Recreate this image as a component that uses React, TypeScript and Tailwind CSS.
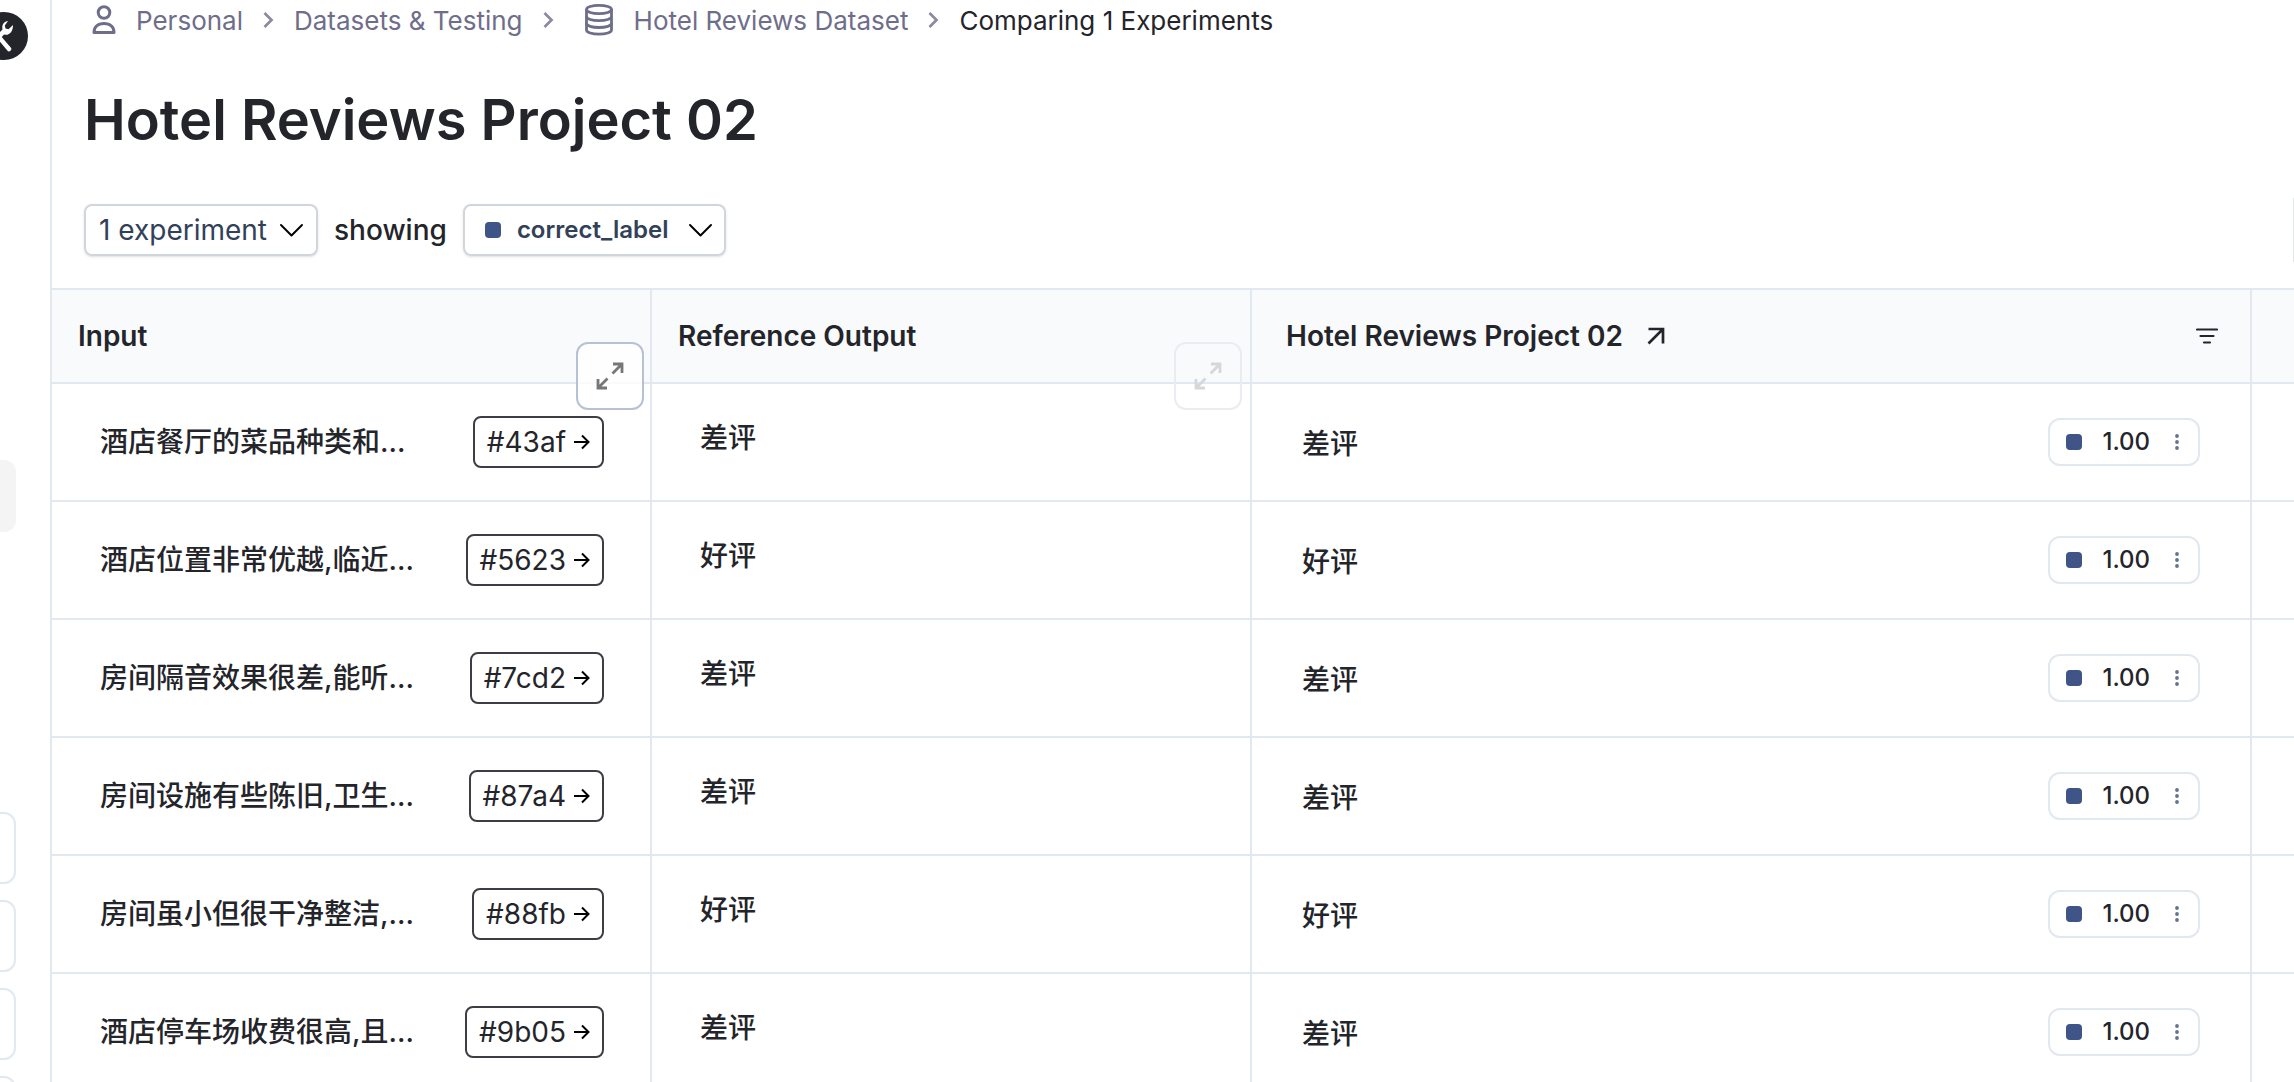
import { type ReactNode } from "react";
import { clsx } from "clsx";

interface IRow {
  input: string;
  id: string;
  reference: string;
  output: string;
  score: string;
}

const rows: IRow[] = [
  { input: "酒店餐厅的菜品种类和...", id: "#43af", reference: "差评", output: "差评", score: "1.00" },
  { input: "酒店位置非常优越,临近...", id: "#5623", reference: "好评", output: "好评", score: "1.00" },
  { input: "房间隔音效果很差,能听...", id: "#7cd2", reference: "差评", output: "差评", score: "1.00" },
  { input: "房间设施有些陈旧,卫生...", id: "#87a4", reference: "差评", output: "差评", score: "1.00" },
  { input: "房间虽小但很干净整洁,...", id: "#88fb", reference: "好评", output: "好评", score: "1.00" },
  { input: "酒店停车场收费很高,且...", id: "#9b05", reference: "差评", output: "差评", score: "1.00" },
];

const sidebarCards = [0, 1, 2, 3];

function PersonIcon() {
  return (
    <svg width="40" height="40" viewBox="0 0 40 40" fill="none" stroke="currentColor" strokeWidth="3" strokeLinejoin="round">
      <circle cx="20" cy="12.5" r="5.800" />
      <path d="M10 32.500c0-5.500 4-9 10-9s10 3.500 10 9z" />
    </svg>
  );
}

function DatabaseIcon() {
  return (
    <svg width="48" height="40" viewBox="0 0 48 40" fill="none" stroke="currentColor" strokeWidth="2.800">
      <ellipse cx="25" cy="9.500" rx="12.500" ry="4.200" />
      <path d="M12.500 9.500v20.500c0 2.400 5.600 4.200 12.500 4.200s12.500-1.800 12.500-4.200V9.500" />
      <path d="M12.500 16.500c0 2.400 5.600 4.200 12.500 4.200s12.500-1.800 12.500-4.200M12.500 23.300c0 2.400 5.600 4.200 12.500 4.200s12.500-1.800 12.500-4.200" />
    </svg>
  );
}

function Crumb({ children, icon }: { children: ReactNode; icon?: ReactNode }) {
  return (
    <li className="flex items-center gap-5">
      <a href="#" className="flex items-center gap-3">
        {icon}
        {children}
      </a>
      <svg width="11" height="18" viewBox="0 0 11 18" fill="none" stroke="currentColor" strokeWidth="2.700" opacity="0.800">
        <path d="M1.500 2l7 7-7 7" />
      </svg>
    </li>
  );
}

function ChevronDown() {
  return (
    <svg width="24" height="24" viewBox="0 0 24 24" fill="none" stroke="#000" strokeWidth="1.900" strokeLinecap="round" strokeLinejoin="round">
      <path d="M2 7l10.500 10.500L23 7" />
    </svg>
  );
}

function ExpandButton({ label, className }: { label: string; className: string }) {
  return (
    <button
      aria-label={label}
      className={clsx("absolute top-13 flex h-17 w-17 items-center justify-center rounded-xl border-2", className)}
    >
      <svg width="28" height="28" viewBox="0 0 28 28" fill="none" stroke="currentColor" strokeWidth="2.800">
        <path d="M16.500 11.500l9.500-9.500M17 2h9v9M11.500 16.500L2 26M2 17v9h9" />
      </svg>
    </button>
  );
}

function Sidebar() {
  return (
    <aside className="w-13 shrink-0 overflow-hidden border-r-2 border-slate-200">
      <div className="-ml-5 mt-3 h-12 w-12 rounded-full bg-[#24252b] text-white">
        <svg width="48" height="48" viewBox="0 0 48 48" fill="currentColor">
          <path d="M28 9c-4 .500-6.500 4-5.500 8.500L10 30l4 4 10-11.500c5 1.500 9-2.500 9-9.500l-4.500 4.200-3-.700-.700-3z" />
          <path d="M18 24l11 13" stroke="currentColor" strokeWidth="4.500" strokeLinecap="round" />
        </svg>
      </div>
      <div className="-ml-14 mt-100 h-18 w-18 rounded-xl bg-[#f4f4f4]" />
      <div className="-ml-13 mt-70 flex flex-col gap-4">
        {sidebarCards.map((item) => (
          <div key={item} className="h-18 w-17 rounded-xl border-2 border-slate-200" />
        ))}
      </div>
    </aside>
  );
}

export default function App() {
  return (
    <div className="flex h-screen overflow-hidden bg-white font-[Inter,'Noto_Sans_CJK_SC',sans-serif] text-[28px] text-[#24252b]">
      <Sidebar />
      <main className="min-w-0 flex-1">
        <header className="pl-8">
          <nav aria-label="Breadcrumb" className="text-[#6f6e8a]">
            <ol className="flex h-10 items-center gap-5 text-[26px]">
              <Crumb icon={<PersonIcon />}>Personal</Crumb>
              <Crumb>Datasets &amp; Testing</Crumb>
              <Crumb icon={<DatabaseIcon />}>Hotel Reviews Dataset</Crumb>
              <li className="text-[#24252b]">Comparing 1 Experiments</li>
            </ol>
          </nav>
          <h1 className="mt-11 text-[56px] leading-[72px] font-semibold">Hotel Reviews Project 02</h1>
          <div className="mt-[42px] flex items-center gap-4 pb-[26px]">
            <button className="flex h-13 items-center gap-3 rounded-lg border-2 border-gray-300 px-[13px] text-slate-700 shadow-sm">
              1 experiment
              <ChevronDown />
            </button>
            <span className="font-medium">showing</span>
            <button className="flex h-13 items-center gap-5 rounded-lg border-2 border-gray-300 pr-3 pl-5 text-[24px] font-semibold text-slate-700 shadow-sm">
              <span className="flex items-center gap-4">
                <span className="h-4 w-4 rounded-sm bg-[#3f5587]" />
                correct_label
              </span>
              <ChevronDown />
            </button>
            <div className="ml-auto h-16 w-px bg-gray-200" />
          </div>
        </header>
        <table className="w-full table-fixed border-separate border-spacing-0 border-t-2 border-slate-200">
          <colgroup>
            <col className="w-150" />
            <col className="w-150" />
            <col className="w-250" />
            <col />
          </colgroup>
          <thead>
            <tr className="h-[94px] bg-slate-50 text-left">
              <th className="relative border-r-2 border-b-2 border-slate-200 px-[26px] font-semibold">
                Input
                <ExpandButton label="Expand input" className="right-1.5 border-[#b7c1d4] bg-white/80 text-[#777777]" />
              </th>
              <th className="relative border-r-2 border-b-2 border-slate-200 px-[26px] font-semibold">
                Reference Output
                <ExpandButton label="Expand reference output" className="right-2 border-[#ebecf2] text-[#d6d7d9]" />
              </th>
              <th className="border-r-2 border-b-2 border-slate-200 pr-8 pl-[34px] font-semibold">
                <div className="flex items-center gap-6">
                  Hotel Reviews Project 02
                  <a href="#" aria-label="Open experiment">
                    <svg width="18" height="18" viewBox="0 0 18 18" fill="none" stroke="currentColor" strokeWidth="2.700">
                      <path d="M1.500 16.500L16 2M1.500 2H16v14.500" />
                    </svg>
                  </a>
                  <button aria-label="Filter" className="ml-auto">
                    <svg width="22" height="20" viewBox="0 0 22 20" fill="none" stroke="currentColor" strokeWidth="2.200" strokeLinecap="round">
                      <path d="M1 3.500h20M4.500 10h13M8 16.500h6" />
                    </svg>
                  </button>
                </div>
              </th>
              <th className="border-b-2 border-slate-200" />
            </tr>
          </thead>
          <tbody>
            {rows.map((row) => (
              <tr key={row.id} className="h-[118px]">
                <td className="border-r-2 border-b-2 border-slate-200 pr-[46px] pl-12">
                  <div className="flex items-center justify-between">
                    <span className="font-medium whitespace-nowrap">{row.input}</span>
                    <a href="#" className="flex h-13 items-center gap-2 rounded-lg border-2 border-[#3d3d45] px-3">
                      {row.id}
                      <svg width="16" height="16" viewBox="0 0 16 16" fill="none" stroke="#000" strokeWidth="2">
                        <path d="M0 8h15M8 1.500l6.500 6.500L8 14.500" />
                      </svg>
                    </a>
                  </div>
                </td>
                <td className="border-r-2 border-b-2 border-slate-200 px-12 pb-2 font-medium">{row.reference}</td>
                <td className="border-r-2 border-b-2 border-slate-200 px-[50px]">
                  <div className="flex items-center justify-between">
                    <span className="pt-1 font-medium">{row.output}</span>
                    <div className="flex h-12 items-center gap-5 rounded-xl border-2 border-slate-200 pr-3 pl-4 text-[24px] font-medium">
                      <span className="h-4 w-4 rounded-sm bg-[#3f5587]" />
                      {row.score}
                      <button aria-label="Score menu" className="text-slate-500">
                        <svg width="16" height="16" viewBox="0 0 16 16" fill="currentColor">
                          <circle cx="7" cy="2" r="1.900" />
                          <circle cx="7" cy="8" r="1.900" />
                          <circle cx="7" cy="14" r="1.900" />
                        </svg>
                      </button>
                    </div>
                  </div>
                </td>
                <td className="border-b-2 border-slate-200" />
              </tr>
            ))}
          </tbody>
        </table>
      </main>
    </div>
  );
}
